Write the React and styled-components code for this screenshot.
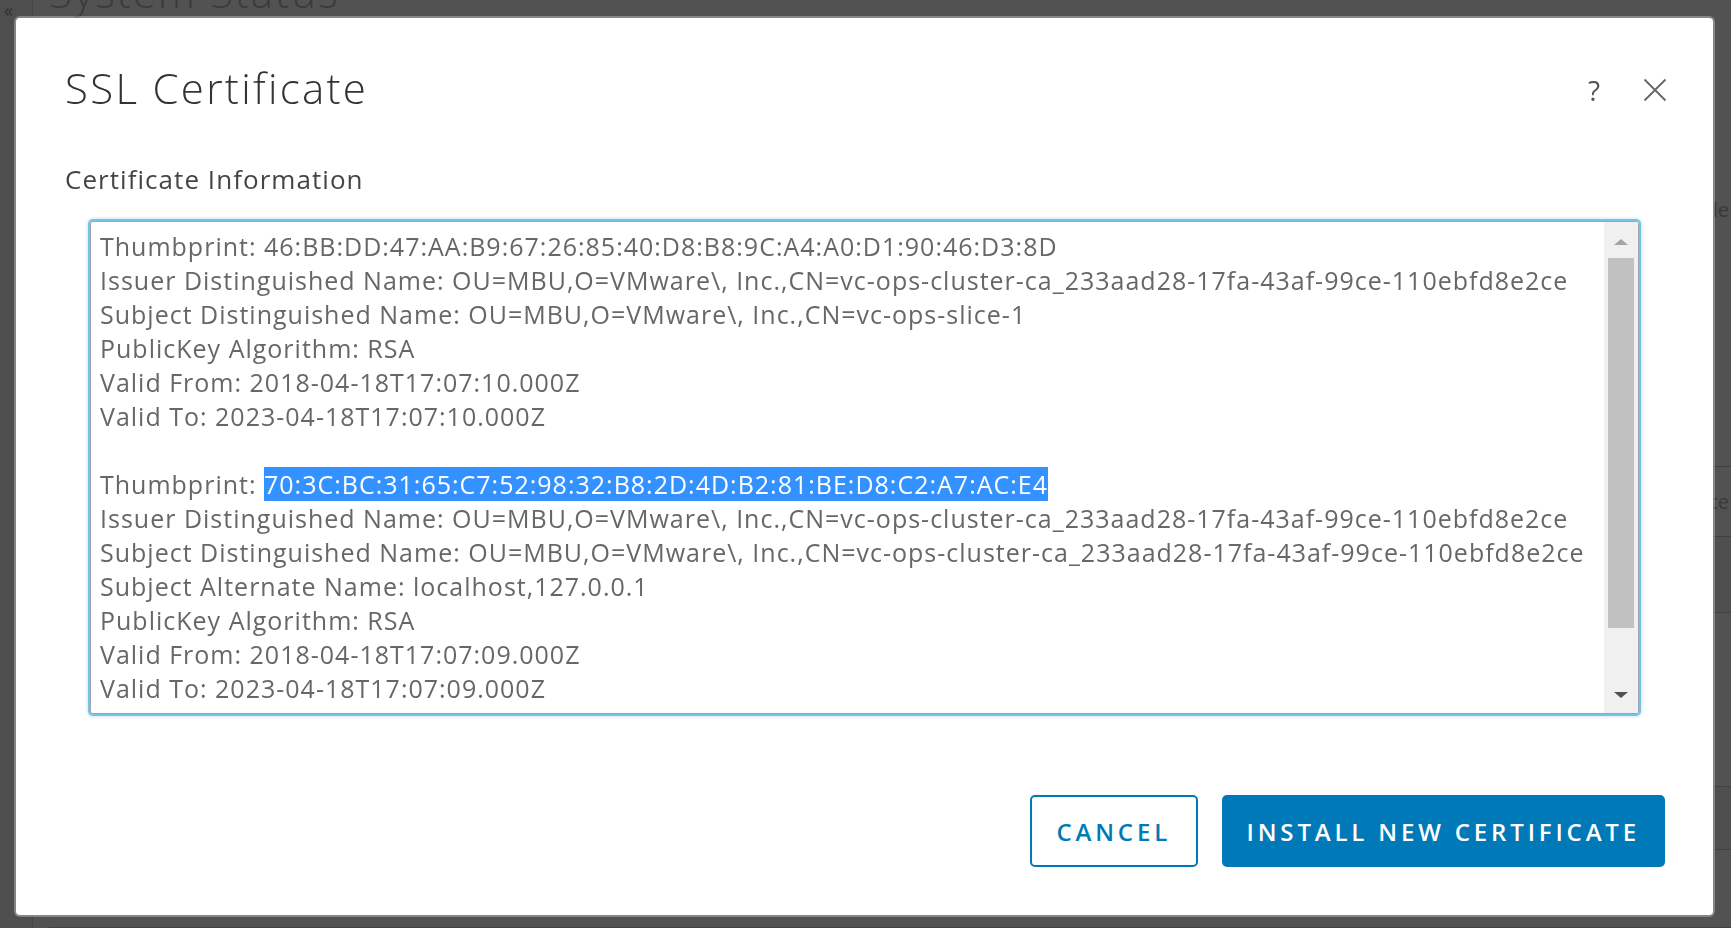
import React from 'react';
import styled, { createGlobalStyle } from 'styled-components';

const GlobalStyle = createGlobalStyle`
  html, body {
    margin: 0;
    padding: 0;
    overflow: hidden;
  }
  body {
    font-family: "Open Sans", "Liberation Sans", sans-serif;
    background: #fff;
  }
`;

/* ---------- page behind the dialog ---------- */

const Page = styled.div`
  display: flex;
  width: 1731px;
  height: 928px;
  background: #fff;
  overflow: hidden;
`;

const SideRail = styled.div`
  width: 33px;
  flex-shrink: 0;
  background: #f2f2f2;
  border-right: 1px solid #d8d8d8;
  color: #9a9a9a;
  font-size: 18px;
  line-height: 20px;
  padding: 0 0 0 4px;
  box-sizing: border-box;
`;

const Main = styled.div`
  flex: 1;
  display: flex;
  flex-direction: column;
  padding-left: 16px;
`;

const PageTitle = styled.h1`
  margin: -36px 0 0;
  font-size: 42px;
  font-weight: 300;
  letter-spacing: 2px;
  color: #b8b8b8;
  line-height: 56px;
`;

const Section = styled.div`
  height: 290px;
  margin-top: 160px;
  display: flex;
  align-items: flex-start;
  justify-content: flex-end;
  padding-top: 16px;
  box-sizing: border-box;
  border-bottom: 1px solid #c8c8c8;
`;

const Row = styled.div`
  height: ${(p) => p.h}px;
  display: flex;
  align-items: center;
  justify-content: flex-end;
  border-bottom: 1px solid #c8c8c8;
  background: ${(p) => (p.shade ? '#f4f4f4' : '#fff')};
`;

const Cell = styled.span`
  font-size: 20px;
  color: #b0b0b0;
  padding-right: 2px;
`;

/* ---------- dialog ---------- */

const Backdrop = styled.div`
  position: fixed;
  inset: 0;
  background: rgba(0, 0, 0, 0.68);
  display: flex;
  align-items: flex-start;
  padding: 18px 0 0 16px;
`;

const Modal = styled.div`
  width: 1697px;
  height: 897px;
  box-sizing: border-box;
  background: #fff;
  border-radius: 4px;
  box-shadow: 0 0 0 2px rgba(255, 255, 255, 0.3);
  display: flex;
  flex-direction: column;
  padding: 46px 48px 48px 49px;
`;

const Header = styled.div`
  display: flex;
  align-items: center;
  justify-content: space-between;
`;

const Title = styled.h2`
  margin: 0;
  font-size: 42px;
  font-weight: 300;
  letter-spacing: 2.3px;
  line-height: 48px;
  color: #333;
`;

const HeaderActions = styled.div`
  display: flex;
  align-items: center;
  gap: 43px;
  margin-right: -2px;
  padding-top: 4px;
`;

const HelpMark = styled.span`
  font-size: 28px;
  font-weight: 400;
  color: #555;
  line-height: 28px;
`;

const CloseButton = styled.button`
  border: 0;
  background: none;
  padding: 0;
  width: 24px;
  height: 24px;
  display: flex;
  cursor: pointer;
`;

const Label = styled.div`
  margin-top: 50px;
  font-size: 26px;
  line-height: 34px;
  letter-spacing: 1.05px;
  color: #454545;
`;

const InfoBox = styled.div`
  margin: 25px 26px 0 25px;
  height: 493px;
  box-sizing: border-box;
  border: 1px solid #9aa6b0;
  border-radius: 3px;
  box-shadow: 0 0 0 2px #79c1e4, 0 0 3px 3px rgba(121, 193, 228, 0.35);
  display: flex;
  overflow: hidden;
`;

const InfoText = styled.div`
  flex: 1;
  padding: 6.5px 9px;
  overflow: hidden;
  white-space: pre;
  font-size: 25px;
  line-height: 34px;
  letter-spacing: 1px;
  color: #676767;
`;

const Selected = styled.span`
  background: #3392ff;
  color: #fff;
`;

const ScrollTrack = styled.div`
  width: 34px;
  flex-shrink: 0;
  background: #f0f0f0;
  display: flex;
  flex-direction: column;
`;

const ScrollArrow = styled.div`
  height: 34px;
  display: flex;
  align-items: center;
  justify-content: center;

  &::before {
    content: '';
    width: 0;
    height: 0;
    border-left: 7px solid transparent;
    border-right: 7px solid transparent;
    ${(p) =>
      p.dir === 'up'
        ? 'border-bottom: 6px solid #a3a3a3; margin-top: 6px;'
        : 'border-top: 6px solid #505050; margin-bottom: 2px;'}
  }
`;

const ScrollThumb = styled.div`
  height: 370px;
  margin: 2px 4px 0;
  background: #c1c1c1;
`;

const ScrollSpacer = styled.div`
  flex: 1;
`;

const Footer = styled.div`
  margin-top: auto;
  display: flex;
  justify-content: flex-end;
  gap: 24px;
`;

const Button = styled.button`
  height: 72px;
  box-sizing: border-box;
  padding: 0 ${(p) => p.pad}px;
  border: 2px solid #0079b8;
  border-radius: 5px;
  background: ${(p) => (p.primary ? '#0079b8' : '#fff')};
  color: ${(p) => (p.primary ? '#fff' : '#0079b8')};
  font-family: "Open Sans", "Liberation Sans", sans-serif;
  font-size: 24px;
  font-weight: 600;
  letter-spacing: 0.16em;
  text-transform: uppercase;
  cursor: pointer;
`;

const firstCert = [
  'Thumbprint: 46:BB:DD:47:AA:B9:67:26:85:40:D8:B8:9C:A4:A0:D1:90:46:D3:8D',
  'Issuer Distinguished Name: OU=MBU,O=VMware\\, Inc.,CN=vc-ops-cluster-ca_233aad28-17fa-43af-99ce-110ebfd8e2ce',
  'Subject Distinguished Name: OU=MBU,O=VMware\\, Inc.,CN=vc-ops-slice-1',
  'PublicKey Algorithm: RSA',
  'Valid From: 2018-04-18T17:07:10.000Z',
  'Valid To: 2023-04-18T17:07:10.000Z',
  '',
];

const secondCert = [
  'Issuer Distinguished Name: OU=MBU,O=VMware\\, Inc.,CN=vc-ops-cluster-ca_233aad28-17fa-43af-99ce-110ebfd8e2ce',
  'Subject Distinguished Name: OU=MBU,O=VMware\\, Inc.,CN=vc-ops-cluster-ca_233aad28-17fa-43af-99ce-110ebfd8e2ce',
  'Subject Alternate Name: localhost,127.0.0.1',
  'PublicKey Algorithm: RSA',
  'Valid From: 2018-04-18T17:07:09.000Z',
  'Valid To: 2023-04-18T17:07:09.000Z',
];

function CloseIcon() {
  return (
    <svg width="24" height="24" viewBox="0 0 24 24">
      <path d="M1.5 1.5 L22.5 22.5 M22.5 1.5 L1.5 22.5" stroke="#666" strokeWidth="1.8" fill="none" />
    </svg>
  );
}

export default function App() {
  return (
    <>
      <GlobalStyle />
      <Page>
        <SideRail>«</SideRail>
        <Main>
          <PageTitle>System Status</PageTitle>
          <Section>
            <Cell>Available</Cell>
          </Section>
          <Row h={70}>
            <Cell>Analytics Service</Cell>
          </Row>
          <Row h={76} shade />
          <Row h={174} />
          <Row h={63} shade />
          <Row h={78} />
        </Main>
      </Page>

      <Backdrop>
        <Modal role="dialog" aria-label="SSL Certificate">
          <Header>
            <Title>SSL Certificate</Title>
            <HeaderActions>
              <HelpMark>?</HelpMark>
              <CloseButton aria-label="Close">
                <CloseIcon />
              </CloseButton>
            </HeaderActions>
          </Header>

          <Label>Certificate Information</Label>

          <InfoBox>
            <InfoText>
              {firstCert.map((l, i) => (
                <div key={'a' + i}>{l || ' '}</div>
              ))}
              <div>
                Thumbprint: <Selected>70:3C:BC:31:65:C7:52:98:32:B8:2D:4D:B2:81:BE:D8:C2:A7:AC:E4</Selected>
              </div>
              {secondCert.map((l, i) => (
                <div key={'b' + i}>{l}</div>
              ))}
            </InfoText>
            <ScrollTrack>
              <ScrollArrow dir="up" />
              <ScrollThumb />
              <ScrollSpacer />
              <ScrollArrow dir="down" />
            </ScrollTrack>
          </InfoBox>

          <Footer>
            <Button pad={24.5}>Cancel</Button>
            <Button primary pad={23}>Install New Certificate</Button>
          </Footer>
        </Modal>
      </Backdrop>
    </>
  );
}
